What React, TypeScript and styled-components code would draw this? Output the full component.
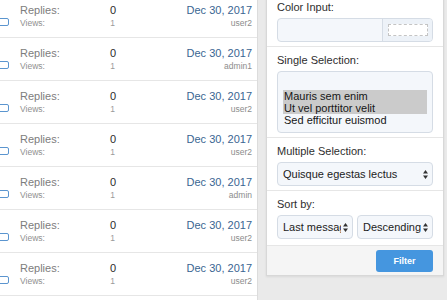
import * as React from 'react';
import styled, { createGlobalStyle } from 'styled-components';

const GlobalStyle = createGlobalStyle`
  html, body {
    margin: 0;
    padding: 0;
    background: #eaeaea;
  }
  body {
    font-family: "Liberation Sans", Arial, Helvetica, sans-serif;
    -webkit-font-smoothing: antialiased;
  }
`;

interface IThread {
    replies: number;
    views: number;
    date: string;
    user: string;
}

const threads: IThread[] = [
    { replies: 0, views: 1, date: 'Dec 30, 2017', user: 'user2' },
    { replies: 0, views: 1, date: 'Dec 30, 2017', user: 'admin1' },
    { replies: 0, views: 1, date: 'Dec 30, 2017', user: 'user2' },
    { replies: 0, views: 1, date: 'Dec 30, 2017', user: 'user2' },
    { replies: 0, views: 1, date: 'Dec 30, 2017', user: 'admin' },
    { replies: 0, views: 1, date: 'Dec 30, 2017', user: 'user2' },
    { replies: 0, views: 1, date: 'Dec 30, 2017', user: 'user2' },
];

const options = ['', 'Mauris sem enim', 'Ut vel porttitor velit', 'Sed efficitur euismod'];
const selected = ['Mauris sem enim', 'Ut vel porttitor velit'];

const Arrows = () => (
    <svg width="5" height="9" viewBox="0 0 5 9">
        <path d="M2.5 0 L5 3.5 H0 Z" fill="#333" />
        <path d="M2.5 9 L0 5.5 H5 Z" fill="#333" />
    </svg>
);

const App = () => {
    return (
        <Page>
            <GlobalStyle />
            <ThreadList>
                {threads.map((t, i) => (
                    <ThreadRow key={i}>
                        <CheckCell>
                            <CheckBox />
                        </CheckCell>
                        <Stats>
                            <StatLine>
                                <StatLabel>Replies:</StatLabel>
                                <StatValue>{t.replies}</StatValue>
                            </StatLine>
                            <StatLine minor>
                                <StatLabel minor>Views:</StatLabel>
                                <StatValue minor>{t.views}</StatValue>
                            </StatLine>
                        </Stats>
                        <LastPost>
                            <PostDate>{t.date}</PostDate>
                            <PostUser>{t.user}</PostUser>
                        </LastPost>
                    </ThreadRow>
                ))}
            </ThreadList>

            <FilterMenu>
                <Section first>
                    <Label>Color Input:</Label>
                    <ColorInput>
                        <ColorText />
                        <Swatch>
                            <SwatchBox />
                        </Swatch>
                    </ColorInput>
                </Section>
                <Section>
                    <Label>Single Selection:</Label>
                    <ListBox role="listbox">
                        {options.map((o, i) => (
                            <ListOption key={i} selected={selected.includes(o)}>
                                {o || '\u00a0'}
                            </ListOption>
                        ))}
                    </ListBox>
                </Section>
                <Section>
                    <Label>Multiple Selection:</Label>
                    <Select>
                        <SelectText>Quisque egestas lectus</SelectText>
                        <Arrows />
                    </Select>
                </Section>
                <Section>
                    <Label>Sort by:</Label>
                    <SortRow>
                        <Select>
                            <SelectText>Last message</SelectText>
                            <Arrows />
                        </Select>
                        <Select>
                            <SelectText>Descending</SelectText>
                            <Arrows />
                        </Select>
                    </SortRow>
                </Section>
                <Footer>
                    <FilterButton>Filter</FilterButton>
                </Footer>
            </FilterMenu>
        </Page>
    );
};

export default App;

const Page = styled('div')`
    display: flex;
    flex-direction: row;
    align-items: flex-start;
    height: 300px;
    overflow: hidden;
`;

const ThreadList = styled('div')`
    width: 257px;
    flex: none;
    margin-top: -5px;
    background: #fff;
    border-right: 1px solid #dcdcdc;
    min-height: 320px;
`;

const ThreadRow = styled('div')`
    display: flex;
    flex-direction: row;
    border-bottom: 1px solid #e6e6e6;
    padding: 8px 5px 0 0;
    box-sizing: content-box;
    height: 34px;
`;

const CheckCell = styled('div')`
    width: 20px;
    flex: none;
    padding-top: 15px;
`;

const CheckBox = styled('div')`
    width: 10px;
    height: 6px;
    margin-left: -3px;
    border: 1px solid #5b95cf;
    border-radius: 2px;
    background: #fff;
`;

const Stats = styled('div')`
    width: 96px;
    display: flex;
    flex-direction: column;
`;

const StatLine = styled('div')<{ minor?: boolean }>`
    display: flex;
    justify-content: space-between;
    line-height: ${p => (p.minor ? '12px' : '14px')};
`;

const StatLabel = styled('span')<{ minor?: boolean }>`
    font-size: ${p => (p.minor ? '8.5px' : '11px')};
    color: ${p => (p.minor ? '#8f8f8f' : '#7d7d7d')};
`;

const StatValue = styled('span')<{ minor?: boolean }>`
    font-size: ${p => (p.minor ? '8.5px' : '11px')};
    color: ${p => (p.minor ? '#9a9a9a' : '#2b2b2b')};
    padding-right: ${p => (p.minor ? '1px' : '0')};
`;

const LastPost = styled('div')`
    flex: 1;
    display: flex;
    flex-direction: column;
    align-items: flex-end;
`;

const PostDate = styled('div')`
    font-size: 11px;
    line-height: 14px;
    color: #3a6592;
`;

const PostUser = styled('div')`
    font-size: 8.5px;
    line-height: 12px;
    color: #8c8c8c;
`;

const FilterMenu = styled('div')`
    width: 176px;
    flex: none;
    margin: -6px 0 0 8px;
    background: #fff;
    border: 1px solid #d8d8d8;
    border-top: none;
    box-shadow: 0 1px 2px rgba(0, 0, 0, 0.08);
`;

const Section = styled('div')<{ first?: boolean }>`
    padding: 6px 10px 4px;
    border-top: ${p => (p.first ? 'none' : '1px solid #e6e6e6')};
`;

const Label = styled('div')`
    font-size: 11px;
    line-height: 14px;
    color: #2e2e2e;
    margin-bottom: 4px;
`;

const ColorInput = styled('div')`
    display: flex;
    height: 22px;
    border: 1px solid #d5dce5;
    border-radius: 4px;
    background: #f4f7fb;
    overflow: hidden;
`;

const ColorText = styled('div')`
    flex: 1;
`;

const Swatch = styled('div')`
    width: 49px;
    border-left: 1px solid #d5dce5;
    background: #edf2f8;
    display: flex;
    align-items: center;
    justify-content: center;
`;

const SwatchBox = styled('div')`
    width: 38px;
    height: 10px;
    background: #fff;
    border: 1px dashed #c4c4c4;
`;

const ListBox = styled('div')`
    height: 48px;
    padding: 6px 5px 6px;
    border: 1px solid #d5dce5;
    border-radius: 4px;
    background: #f4f7fb;
    overflow: hidden;
    display: flex;
    flex-direction: column;
    justify-content: flex-end;
`;

const ListOption = styled('div')<{ selected?: boolean }>`
    font-size: 11px;
    line-height: 12px;
    padding-left: 1px;
    color: #161616;
    background: ${p => (p.selected ? '#cbcbcb' : 'transparent')};
`;

const Select = styled('div')`
    flex: 1;
    min-width: 0;
    height: 22px;
    display: flex;
    align-items: center;
    gap: 2px;
    padding: 0 4px 0 5px;
    border: 1px solid #d5dce5;
    border-radius: 4px;
    background: #f4f7fb;
`;

const SelectText = styled('span')`
    flex: 1;
    min-width: 0;
    font-size: 11px;
    color: #1c1c1c;
    white-space: nowrap;
    overflow: hidden;
`;

const SortRow = styled('div')`
    display: flex;
    gap: 4px;
`;

const Footer = styled('div')`
    display: flex;
    justify-content: flex-end;
    padding: 4px 10px 3px;
    margin-top: 2px;
    background: #f5f5f5;
    border-top: 1px solid #e6e6e6;
`;

const FilterButton = styled('button')`
    width: 57px;
    height: 22px;
    border: none;
    border-radius: 3px;
    background: #4596df;
    color: #fff;
    font-family: "Liberation Sans", Arial, sans-serif;
    font-size: 9px;
    font-weight: bold;
    cursor: pointer;
`;
